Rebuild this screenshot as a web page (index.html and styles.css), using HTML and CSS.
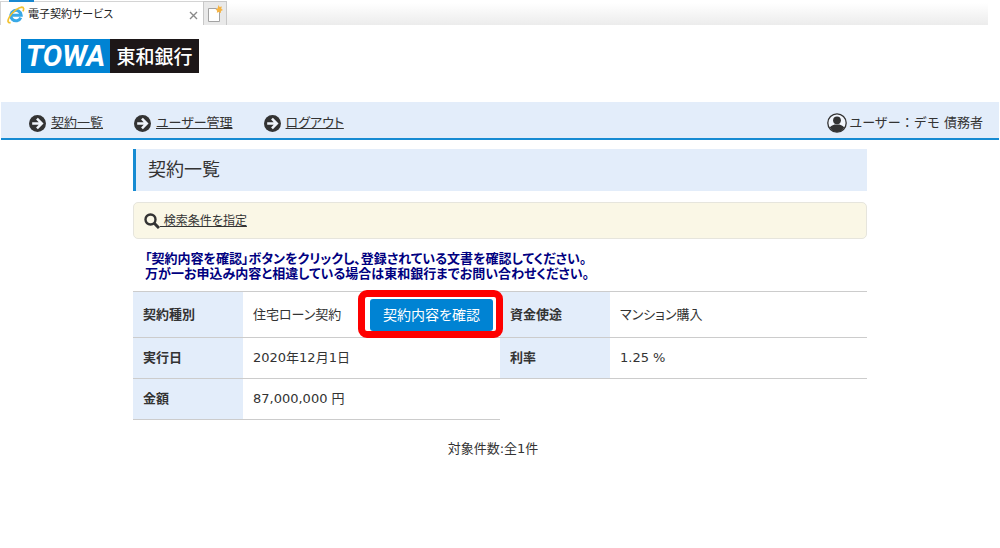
FILE: index.html
```html
<!DOCTYPE html>
<html lang="ja">
<head>
<meta charset="utf-8">
<meta name="viewport" content="width=device-width, initial-scale=1">
<title>電子契約サービス</title>
<link rel="stylesheet" href="styles.css">
</head>
<body>
<div class="tabbar">
  <div class="tab">
    <svg class="tab-icon" viewBox="0 0 18 18" aria-hidden="true">
      <path d="M13.8 11.6A5.2 5.2 0 1 1 14.2 9.3H5" fill="none" stroke="#39a9e6" stroke-width="3"/>
      <path d="M3.6 16.4C.4 17.6.2 14.5 2.6 10.6 5.600 5.800 11.300 1.300 14.800 1.100c2.200 0 2.200 2.100 1.100 4.300" fill="none" stroke="#f2c12e" stroke-width="1.600"/>
    </svg>
    <span class="tab-title">電子契約サービス</span>
    <button class="tab-close" type="button" aria-label="タブを閉じる">
      <svg viewBox="0 0 9 9" aria-hidden="true"><path d="M1 1l7 7M8 1L1 8" stroke="#8a8a8a" stroke-width="1.400"/></svg>
    </button>
  </div>
  <button class="tab-new" type="button" aria-label="新しいタブ">
    <svg viewBox="0 0 16 18" aria-hidden="true">
      <path d="M1.500 3.500h8l3 3v10h-11z" fill="#fff" stroke="#a3a3a3"/>
      <path d="M11.500 0l1.100 2.100 2.300-.600-.700 2.200 1.800 1.300-2.100.900.100 2.100-2.100-.900-2.100.700.400-2.100L8.500 4.500l2-1z" fill="#f5b342"/>
    </svg>
  </button>
  <span class="tab-accent"></span>
</div>

<header class="header">
  <a class="logo" href="#"><span class="logo-mark">TOWA</span><span class="logo-name">東和銀行</span></a>
</header>

<nav class="nav">
  <ul class="nav-list">
    <li><a class="nav-link" href="#"><svg viewBox="0 0 16 16" aria-hidden="true"><circle cx="8" cy="8" r="8" fill="#333"/><path d="M3 8H12M7.500 3.500L12 8 7.500 12.500" fill="none" stroke="#f1f5fb" stroke-width="2.400"/></svg><span>契約一覧</span></a></li>
    <li><a class="nav-link" href="#"><svg viewBox="0 0 16 16" aria-hidden="true"><circle cx="8" cy="8" r="8" fill="#333"/><path d="M3 8H12M7.500 3.500L12 8 7.500 12.500" fill="none" stroke="#f1f5fb" stroke-width="2.400"/></svg><span>ユーザー管理</span></a></li>
    <li><a class="nav-link" href="#"><svg viewBox="0 0 16 16" aria-hidden="true"><circle cx="8" cy="8" r="8" fill="#333"/><path d="M3 8H12M7.500 3.500L12 8 7.500 12.500" fill="none" stroke="#f1f5fb" stroke-width="2.400"/></svg><span>ログアウト</span></a></li>
  </ul>
  <div class="user">
    <svg viewBox="0 0 20 20" aria-hidden="true">
      <circle cx="10" cy="10" r="9.200" fill="#f1f5fb" stroke="#333" stroke-width="1.300"/>
      <circle cx="10" cy="7.300" r="3.900" fill="#333"/>
      <path d="M2.800 14.500C4.200 12.500 6 12 7.600 11.500h4.800c1.600.5 3.400 1 4.800 3C15.500 17.500 13 19 10 19s-5.500-1.500-7.200-4.500z" fill="#333"/>
    </svg>
    <span>ユーザー：デモ 債務者</span>
  </div>
</nav>

<main class="content">
  <h1 class="title">契約一覧</h1>
  <div class="search">
    <a class="search-link" href="#"><svg viewBox="0 0 16 16" aria-hidden="true"><circle cx="6.500" cy="6.500" r="5" fill="none" stroke="#333" stroke-width="2.400"/><path d="M10 10l5 5" stroke="#333" stroke-width="3"/></svg><span>&nbsp;検索条件を指定</span></a>
  </div>
  <p class="note">「契約内容を確認」ボタンをクリックし、登録されている文書を確認してください。<br>万が一お申込み内容と相違している場合は東和銀行までお問い合わせください。</p>
  <table class="contract">
    <colgroup><col class="col-label"><col><col class="col-label"><col></colgroup>
    <tbody>
      <tr class="row-first">
        <th scope="row">契約種別</th>
        <td><div class="kind"><span>住宅ローン契約</span><span class="highlight"><button class="confirm" type="button">契約内容を確認</button></span></div></td>
        <th scope="row">資金使途</th>
        <td>マンション購入</td>
      </tr>
      <tr>
        <th scope="row">実行日</th>
        <td>2020年12月1日</td>
        <th scope="row">利率</th>
        <td>1.25 %</td>
      </tr>
      <tr>
        <th scope="row">金額</th>
        <td>87,000,000 円</td>
      </tr>
    </tbody>
  </table>
  <p class="count">対象件数:全1件</p>
</main>
</body>
</html>
```
FILE: styles.css
```css
* {
  box-sizing: border-box;
}

body {
  margin: 0;
  background: #fff;
  color: #333;
  font: 13px/20px "DejaVu Sans", "Noto Sans CJK JP", sans-serif;
  font-feature-settings: "palt";
}

svg {
  display: block;
  flex: none;
}

button {
  font: inherit;
  font-feature-settings: inherit;
  padding: 0;
  border: 0;
  background: none;
}

/* Browser tabs */
.tabbar {
  position: relative;
  display: flex;
  align-items: flex-end;
  height: 25px;
  margin-right: 12px;
  background: linear-gradient(#fff 3px, #ececec);
}

.tab {
  display: flex;
  align-items: center;
  width: 203px;
  height: 24px;
  padding: 3px 5px 0 6px;
  border-top: 1px solid #d4d4d4;
  border-left: 1px solid #d4d4d4;
  background: #fff;
}

.tab-icon {
  width: 18px;
  height: 18px;
}

.tab-title {
  flex: 1;
  margin-left: 3px;
  font-size: 11px;
  color: #222;
}

.tab-close svg {
  width: 9px;
  height: 9px;
}

.tab-new {
  width: 24px;
  height: 24px;
  padding: 1px 0 0 3px;
  border: 1px solid #c8c8c8;
  border-bottom: 0;
  background: #e9e9e9;
}

.tab-new svg {
  width: 16px;
  height: 18px;
}

.tab-accent {
  position: absolute;
  top: 0;
  left: 9px;
  width: 25px;
  height: 2px;
  background: #1787d0;
}

/* Bank logo */
.header {
  padding: 14px 21px 29px;
}

.logo {
  display: inline-flex;
  height: 34px;
  color: #fff;
  text-decoration: none;
  vertical-align: top;
}

.logo-mark,
.logo-name {
  display: flex;
  align-items: center;
  justify-content: center;
  width: 89px;
}

.logo-mark {
  background: #0083d3;
  font: italic bold 29px/34px Roboto, sans-serif;
}

.logo-name {
  background: #1d1718;
  font: 500 19px/34px "Noto Sans CJK JP", sans-serif;
}

/* Navigation */
.nav {
  display: flex;
  align-items: center;
  justify-content: space-between;
  margin: 0 1px;
  padding: 7px 16px 1px 28px;
  border-bottom: 2px solid #168bd2;
  background: #e3edfa;
  line-height: 28px;
}

.nav-list {
  display: flex;
  gap: 31px;
  margin: 0;
  padding: 0;
  list-style: none;
}

.nav-link {
  display: flex;
  align-items: center;
  gap: 5px;
  color: #333;
}

.nav-link svg {
  width: 17px;
  height: 17px;
}

.user {
  display: flex;
  align-items: center;
  gap: 2px;
  font-feature-settings: normal;
}

.user svg {
  width: 20px;
  height: 20px;
}

/* Content */
.content {
  max-width: 734px;
  margin: 9px auto 0;
}

.title {
  margin: 0 0 11px;
  padding: 0 12px;
  border-left: 3px solid #168bd2;
  background: #e3edfa;
  font-size: 18px;
  font-weight: 400;
  line-height: 42px;
}

.search {
  padding: 8px 10px 7px;
  border: 1px solid #e6e5dd;
  border-radius: 5px;
  background: #faf7e6;
}

.search-link {
  display: flex;
  align-items: center;
  color: #333;
  font-size: 12px;
}

.search-link svg {
  width: 16px;
  height: 16px;
}

.note {
  margin: 12px 0 10px;
  padding-left: 12px;
  color: #000080;
  font-weight: 700;
  line-height: 15px;
}

.contract {
  width: 100%;
  border-collapse: collapse;
  table-layout: fixed;
}

.col-label {
  width: 110px;
}

.contract th,
.contract td {
  height: 41px;
  padding: 0 10px;
  border-bottom: 1px solid #ccc;
  text-align: left;
}

.contract th {
  background: #e3edfa;
}

.contract .row-first th,
.contract .row-first td {
  height: 46px;
  border-top: 1px solid #ccc;
}

.kind {
  display: flex;
  align-items: center;
  justify-content: space-between;
  margin-right: -3px;
}

.highlight {
  position: relative;
}

.highlight::after {
  content: "";
  position: absolute;
  inset: -9px -10px -7px -12px;
  border: 7px solid #fe0000;
  border-radius: 9px;
  pointer-events: none;
}

.confirm {
  display: block;
  width: 123px;
  border-radius: 3px;
  background: #0083d3;
  color: #fff;
  font-size: 14px;
  line-height: 32px;
}

.count {
  margin: 19px 14px 0 0;
  text-align: center;
}
```
